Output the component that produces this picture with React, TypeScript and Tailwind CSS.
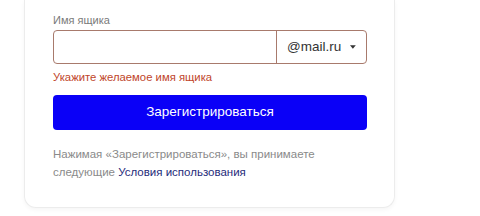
import React from 'react';

function CaretDown() {
  return (
    <svg className="w-[7px] h-[4px]" viewBox="0 0 7 4" fill="currentColor">
      <path d="M0 0h7L3.5 4z" />
    </svg>
  );
}

export default function App() {
  return (
    <div className="w-[480px] h-[216px] bg-white overflow-hidden" style={{ fontFamily: '"Liberation Sans", Arial, sans-serif' }}>
      <div className="ml-[24px] w-[371px] rounded-b-[12px] border-x border-b border-[#ececec] shadow-[0_2px_4px_rgba(0,0,0,0.04)] bg-white px-[28px] pt-[13px] pb-[26px]">
        <div className="text-[11px] leading-[15px] text-[#7a7a7a]">Имя ящика</div>
        <div className="mt-[2px] flex h-[34px] w-[314px] rounded-[4px] border border-[#a87a6c]">
          <input className="flex-1 min-w-0 bg-transparent outline-none px-3 text-[14px]" />
          <div className="flex w-[90px] items-center border-l border-[#a87a6c] pl-[10px] pr-[10px] text-[#333] gap-[9px]">
            <span className="text-[13.5px]">@mail.ru</span>
            <CaretDown />
          </div>
        </div>
        <div className="mt-[6px] text-[11.3px] leading-[15px] text-[#c0452a]">Укажите желаемое имя ящика</div>
        <button
          type="button"
          className="mt-[10px] flex h-[35px] w-[314px] items-center justify-center rounded-[4px] bg-[#0a00f7] text-[13.5px] text-white"
        >
          Зарегистрироваться
        </button>
        <p className="mt-[15px] text-[11.5px] leading-[18px] text-[#8a8a8a]">
          Нажимая «Зарегистрироваться», вы принимаете
          <br />
          следующие <span className="text-[#1f2b7a]">Условия использования</span>
        </p>
      </div>
    </div>
  );
}
